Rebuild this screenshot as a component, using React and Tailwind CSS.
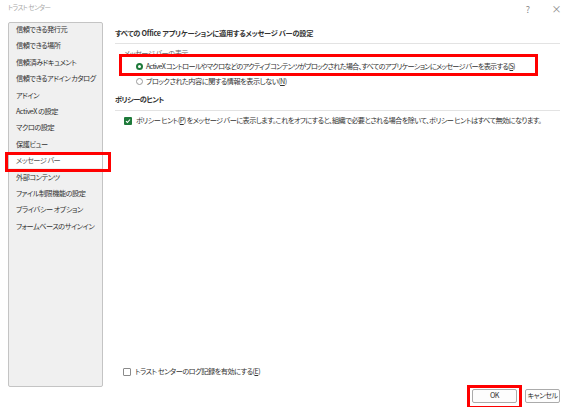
import React from 'react';

const navItems = [
  '信頼できる発行元',
  '信頼できる場所',
  '信頼済みドキュメント',
  '信頼できるアドイン カタログ',
  'アドイン',
  'ActiveX の設定',
  'マクロの設定',
  '保護ビュー',
  'メッセージ バー',
  '外部コンテンツ',
  'ファイル制限機能の設定',
  'プライバシー オプション',
  'フォームベースのサインイン',
];

const RedBox = ({ className }) => (
  <div className={`absolute border-[3px] border-[#ff0000] pointer-events-none ${className}`} />
);

const Radio = ({ checked }) =>
  checked ? (
    <span className="w-[7px] h-[7px] rounded-full border-[2px] border-[#1e7a3a] bg-white shrink-0" />
  ) : (
    <span className="w-[7px] h-[7px] rounded-full border border-[#9a9a9a] bg-white shrink-0" />
  );

const Check = ({ checked }) =>
  checked ? (
    <span className="w-[8px] h-[8px] rounded-[1px] bg-[#1e7a3a] flex items-center justify-center shrink-0">
      <svg width="6" height="6" viewBox="0 0 6 6">
        <path d="M1 3.1 L2.4 4.5 L5 1.5" stroke="white" strokeWidth="1.1" fill="none" />
      </svg>
    </span>
  ) : (
    <span className="w-[8px] h-[8px] rounded-[1px] border border-[#8a8a8a] bg-white shrink-0" />
  );

export default function App() {
  return (
    <div
      className="w-[569px] h-[407px] bg-white flex flex-col text-[#333] text-[7.2px] tracking-[-0.5px] leading-none whitespace-nowrap overflow-hidden [font-feature-settings:'palt']"
      style={{ fontFamily: '"Noto Sans CJK JP", "Noto Sans", sans-serif' }}
    >
      {/* タイトル */}
      <div className="h-[22px] flex items-start justify-between pl-2 pt-[4px] text-[#a8a8a8] text-[6.5px]">
        <span>トラスト センター</span>
        <div className="flex items-center gap-[22px] pr-[8px] text-[9px] text-[#8a8a8a]">
          <span>?</span>
          <span className="text-[10px]">×</span>
        </div>
      </div>

      <div className="flex flex-1 min-h-0">
        {/* サイドバー */}
        <div className="ml-2 w-[95px] h-[365px] bg-[#f0f0f0] border border-[#c4c4c4] rounded-[2px] shrink-0">
          <div className="-mt-[1.5px]">
            {navItems.map((item) =>
              item === 'メッセージ バー' ? (
                <div key={item} className="relative h-[16.4px] flex items-center">
                  <div className="w-full h-[15px] bg-white flex items-center pl-[7px] text-[#555]">{item}</div>
                  <RedBox className="-left-[4px] -right-[9px] -top-[1px] -bottom-[3px]" />
                </div>
              ) : (
                <div key={item} className="h-[16.4px] flex items-center pl-[7px]">
                  {item}
                </div>
              )
            )}
          </div>
        </div>

        {/* 右側 */}
        <div className="flex-1 flex flex-col pl-[12px] pr-[9px]">
          <div className="pt-[8px] pb-[6px] font-bold tracking-[-0.25px]">
            すべての Office アプリケーションに適用するメッセージ バーの設定
          </div>
          <div className="h-px bg-[#e3e3e3]" />
          <div className="pl-[9px] pt-[6px] text-[#666]">メッセージ バーの表示</div>
          <div className="relative mt-[3px] h-[12px] flex items-center gap-[3px] pl-[21px]">
            <Radio checked />
            <span className="tracking-[-0.78px]">
              ActiveX コントロールやマクロなどのアクティブ コンテンツがブロックされた場合、すべてのアプリケーションにメッセージ バーを表示する(<span className="underline">S</span>)
            </span>
            <RedBox className="left-[4px] w-[419px] -top-[6px] -bottom-[4px]" />
          </div>
          <div className="mt-[3px] h-[12px] flex items-center gap-[3px] pl-[21px]">
            <Radio />
            <span>
              ブロックされた内容に関する情報を表示しない(<span className="underline">N</span>)
            </span>
          </div>
          <div className="pt-[9px] pb-[6px] font-bold">ポリシーのヒント</div>
          <div className="h-px bg-[#e3e3e3]" />
          <div className="mt-[5px] h-[10px] flex items-center gap-[4px] pl-[9px]">
            <Check checked />
            <span className="tracking-[-0.58px]">
              ポリシー ヒント(<span className="underline">P</span>) をメッセージ バーに表示します。これをオフにすると、組織で必要とされる場合を除いて、ポリシー ヒントはすべて無効になります。
            </span>
          </div>
          <div className="flex-1" />
          <div className="mb-[10px] h-[10px] flex items-center gap-[4px] pl-[8px]">
            <Check />
            <span>
              トラスト センターのログ記録を有効にする(<span className="underline">E</span>)
            </span>
          </div>
        </div>
      </div>

      {/* ボタン */}
      <div className="h-[20px] flex items-start justify-end gap-[8px] pr-[9px] pt-[2px]">
        <div className="relative">
          <button className="w-[45px] h-[14px] bg-[#fdfdfd] border border-[#ababab] rounded-[2px] text-[7.2px] text-[#333] flex items-center justify-center">
            OK
          </button>
          <RedBox className="-left-[5px] -right-[5px] -top-[4px] -bottom-[6px]" />
        </div>
        <button className="w-[35px] h-[14px] bg-[#fdfdfd] border border-[#ababab] rounded-[2px] text-[7.2px] text-[#333] flex items-center justify-center">
          キャンセル
        </button>
      </div>
    </div>
  );
}
